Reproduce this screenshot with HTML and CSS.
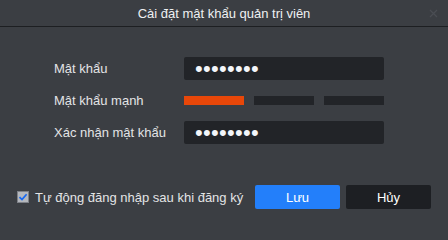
FILE: index.html
```html
<!DOCTYPE html>
<html lang="vi">
<head>
<meta charset="utf-8">
<link rel="stylesheet" href="styles.css">
</head>
<body>
<div class="dialog">
  <div class="titlebar">
    <span class="title">Cài đặt mật khẩu quản trị viên</span>
    <span class="close"><svg width="9" height="9" viewBox="0 0 9 9"><path d="M1 1L8 8M8 1L1 8" stroke="#4a4d53" stroke-width="1.3"/></svg></span>
  </div>
  <div class="form">
    <div class="label">Mật khẩu</div>
    <div class="field"><div class="input">••••••••</div></div>
    <div class="label">Mật khẩu mạnh</div>
    <div class="field"><div class="strength"><span class="seg on"></span><span class="seg"></span><span class="seg"></span></div></div>
    <div class="label">Xác nhận mật khẩu</div>
    <div class="field"><div class="input">••••••••</div></div>
  </div>
  <div class="footer">
    <label class="check"><span class="box"><svg width="10" height="10" viewBox="0 0 10 10"><path d="M1.5 5.2L4 7.6L8.6 2.2" fill="none" stroke="#1668f2" stroke-width="1.7"/></svg></span>Tự động đăng nhập sau khi đăng ký</label>
    <div class="buttons">
      <button class="btn primary">Lưu</button>
      <button class="btn secondary">Hủy</button>
    </div>
  </div>
</div>
</body>
</html>
```

FILE: styles.css
```css
html, body {
  margin: 0;
  padding: 0;
  background: #3b3e43;
}
.dialog {
  width: 448px;
  height: 228px;
  background: #3b3e43;
  font-family: "Liberation Sans", Arial, sans-serif;
  font-size: 13px;
  color: #e3e4e6;
  display: flex;
  flex-direction: column;
}
.titlebar {
  height: 26px;
  border-bottom: 1px solid #1d1f22;
  display: flex;
  align-items: center;
  justify-content: center;
  position: relative;
}
.title {
  font-size: 13px;
  color: #eef0f2;
}
.close {
  position: absolute;
  right: 10px;
  top: 9px;
  display: flex;
}
.form {
  padding: 25px 64px 0 54px;
  display: grid;
  grid-template-columns: 130px 200px;
  grid-auto-rows: 32px;
}
.label {
  display: flex;
  align-items: center;
  color: #e3e4e6;
}
.field {
  display: flex;
  align-items: center;
}
.input {
  width: 200px;
  height: 23px;
  background: #222428;
  border-radius: 2px;
  box-sizing: border-box;
  padding-left: 11px;
  font-size: 22px;
  line-height: 23px;
  color: #f4f6fa;
  letter-spacing: 0.3px;
}
.strength {
  display: flex;
  gap: 10px;
  width: 200px;
}
.seg {
  width: 60px;
  height: 9px;
  background: #222428;
}
.seg.on {
  background: #e84709;
}
.footer {
  margin-top: 37px;
  padding: 0 17px;
  display: flex;
  align-items: center;
  justify-content: space-between;
}
.check {
  display: flex;
  align-items: center;
  gap: 6px;
  font-size: 13px;
  color: #e3e4e6;
}
.box {
  width: 12px;
  height: 12px;
  box-sizing: border-box;
  border: 1px solid #7e8188;
  background: #b4b7bd;
  display: flex;
  align-items: center;
  justify-content: center;
}
.buttons {
  display: flex;
  gap: 6px;
}
.btn {
  width: 85px;
  height: 24px;
  border: none;
  border-radius: 2px;
  font-family: "Liberation Sans", Arial, sans-serif;
  font-size: 13px;
  color: #ffffff;
  padding: 0;
}
.primary {
  background: #237ffa;
}
.secondary {
  background: #1d1f23;
}
```
